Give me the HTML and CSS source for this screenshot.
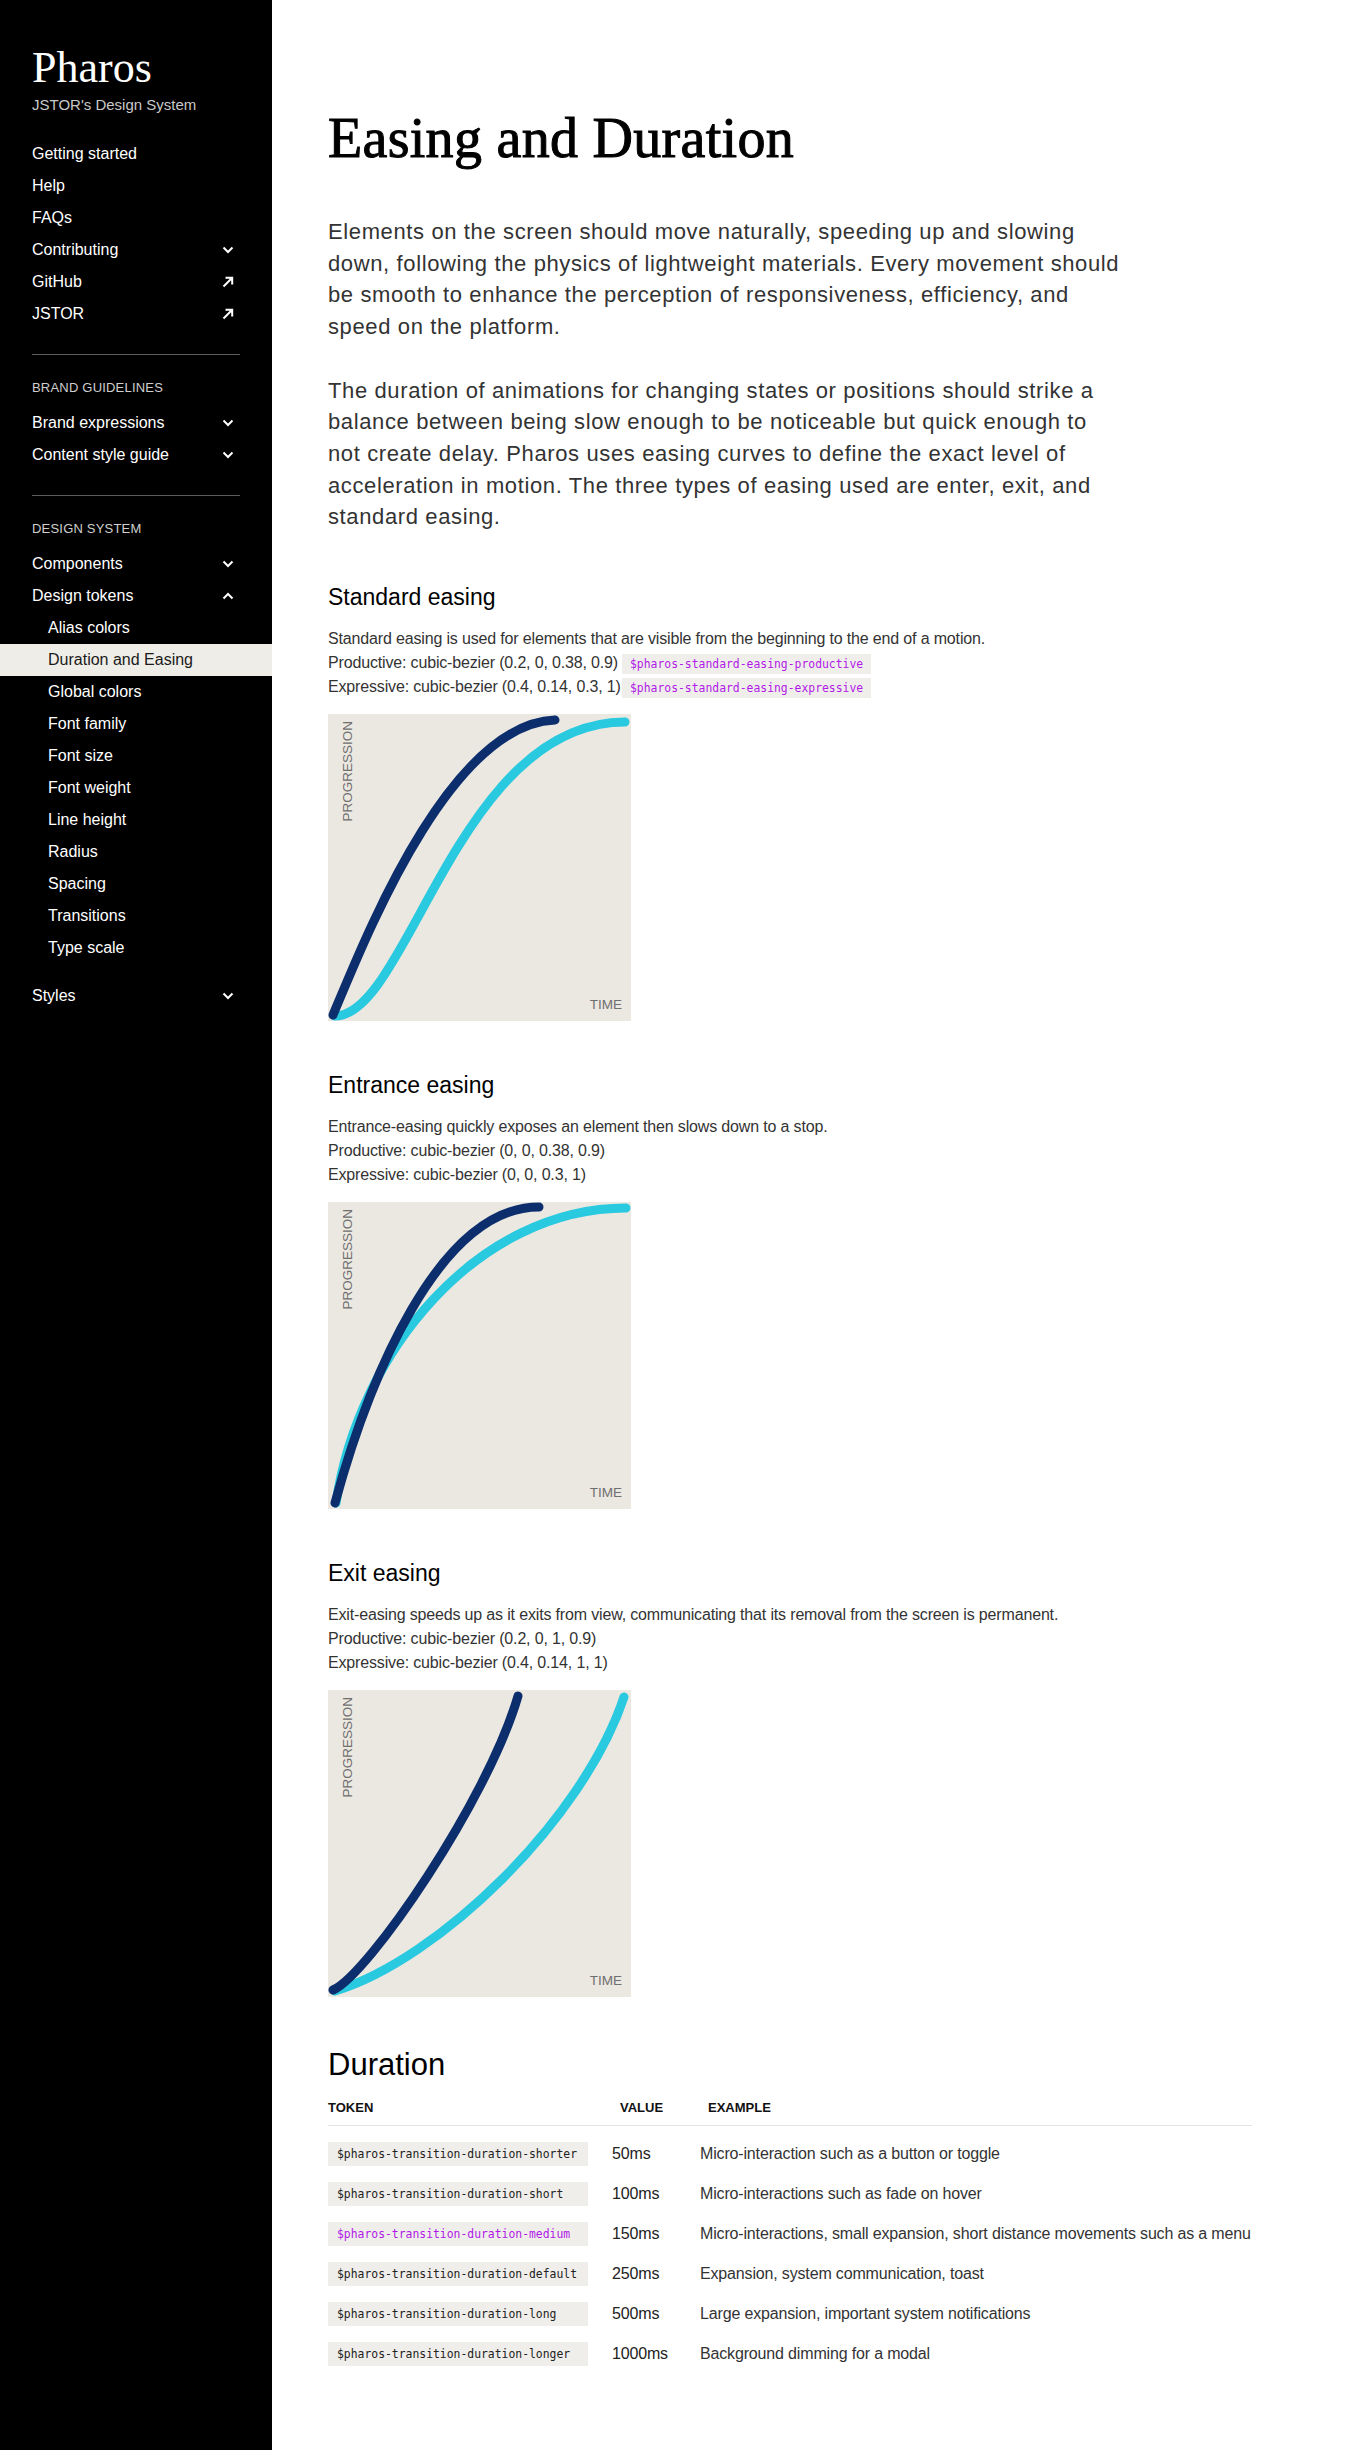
FILE: index.html
```html
<!DOCTYPE html>
<html lang="en">
<head>
<meta charset="utf-8">
<title>Easing and Duration – Pharos</title>
<link rel="stylesheet" href="styles.css">
</head>
<body>
<div class="layout">
  <aside class="sidebar">
    <div class="brand">
      <div class="brand-name">Pharos</div>
      <div class="brand-sub">JSTOR's Design System</div>
    </div>
    <ul class="nav">
      <li class="nav-item"><span>Getting started</span></li>
      <li class="nav-item"><span>Help</span></li>
      <li class="nav-item"><span>FAQs</span></li>
      <li class="nav-item"><span>Contributing</span><span class="nav-icon"><svg width="12" height="8" viewBox="0 0 12 8"><path d="M1.5 1.5 L6 6 L10.5 1.5" fill="none" stroke="currentColor" stroke-width="2"/></svg></span></li>
      <li class="nav-item"><span>GitHub</span><span class="nav-icon"><svg width="12" height="12" viewBox="0 0 12 12"><path d="M1.5 10.5 L10 2 M3.5 1.8 H10.2 V8.5" fill="none" stroke="currentColor" stroke-width="2"/></svg></span></li>
      <li class="nav-item"><span>JSTOR</span><span class="nav-icon"><svg width="12" height="12" viewBox="0 0 12 12"><path d="M1.5 10.5 L10 2 M3.5 1.8 H10.2 V8.5" fill="none" stroke="currentColor" stroke-width="2"/></svg></span></li>
    </ul>
    <hr class="divider">
    <div class="nav-section">
      <div class="nav-label">BRAND GUIDELINES</div>
      <ul class="nav nav-tight">
        <li class="nav-item"><span>Brand expressions</span><span class="nav-icon"><svg width="12" height="8" viewBox="0 0 12 8"><path d="M1.5 1.5 L6 6 L10.5 1.5" fill="none" stroke="currentColor" stroke-width="2"/></svg></span></li>
        <li class="nav-item"><span>Content style guide</span><span class="nav-icon"><svg width="12" height="8" viewBox="0 0 12 8"><path d="M1.5 1.5 L6 6 L10.5 1.5" fill="none" stroke="currentColor" stroke-width="2"/></svg></span></li>
      </ul>
    </div>
    <hr class="divider">
    <div class="nav-section">
      <div class="nav-label">DESIGN SYSTEM</div>
      <ul class="nav nav-tight">
        <li class="nav-item"><span>Components</span><span class="nav-icon"><svg width="12" height="8" viewBox="0 0 12 8"><path d="M1.5 1.5 L6 6 L10.5 1.5" fill="none" stroke="currentColor" stroke-width="2"/></svg></span></li>
        <li class="nav-item"><span>Design tokens</span><span class="nav-icon"><svg width="12" height="8" viewBox="0 0 12 8"><path d="M1.5 6.5 L6 2 L10.5 6.5" fill="none" stroke="currentColor" stroke-width="2"/></svg></span></li>
      </ul>
      <ul class="subnav">
        <li class="nav-item sub">Alias colors</li>
        <li class="nav-item sub active">Duration and Easing</li>
        <li class="nav-item sub">Global colors</li>
        <li class="nav-item sub">Font family</li>
        <li class="nav-item sub">Font size</li>
        <li class="nav-item sub">Font weight</li>
        <li class="nav-item sub">Line height</li>
        <li class="nav-item sub">Radius</li>
        <li class="nav-item sub">Spacing</li>
        <li class="nav-item sub">Transitions</li>
        <li class="nav-item sub">Type scale</li>
      </ul>
      <ul class="nav nav-styles">
        <li class="nav-item"><span>Styles</span><span class="nav-icon"><svg width="12" height="8" viewBox="0 0 12 8"><path d="M1.5 1.5 L6 6 L10.5 1.5" fill="none" stroke="currentColor" stroke-width="2"/></svg></span></li>
      </ul>
    </div>
  </aside>

  <main class="content">
    <h1 class="title">Easing and Duration</h1>
    <div class="intro">
      <p>Elements on the screen should move naturally, speeding up and slowing down, following the physics of lightweight materials. Every movement should be smooth to enhance the perception of responsiveness, efficiency, and speed on the platform.</p>
      <p>The duration of animations for changing states or positions should strike a balance between being slow enough to be noticeable but quick enough to not create delay. Pharos uses easing curves to define the exact level of acceleration in motion. The three types of easing used are enter, exit, and standard easing.</p>
    </div>

    <section class="section">
      <h2 class="section-title">Standard easing</h2>
      <div class="desc">
        <div>Standard easing is used for elements that are visible from the beginning to the end of a motion.</div>
        <div class="bezier"><span class="bezier-label">Productive: cubic-bezier (0.2, 0, 0.38, 0.9)</span><span><code class="token">$pharos-standard-easing-productive</code></span></div>
        <div class="bezier"><span class="bezier-label">Expressive: cubic-bezier (0.4, 0.14, 0.3, 1)</span><span><code class="token">$pharos-standard-easing-expressive</code></span></div>
      </div>
      <svg class="chart" width="303" height="307" viewBox="0 0 303 307">
        <rect width="303" height="307" fill="#ebe8e1"/>
        <text class="axis" transform="translate(23.5 107.5) rotate(-90)">PROGRESSION</text>
        <text class="axis" x="294" y="295" text-anchor="end">TIME</text>
        <path d="M7 302 C80 302 130 8 297 8" class="curve-light"/>
        <path d="M5 301 C35 230 120 10 227 6" class="curve-dark"/>
      </svg>
    </section>

    <section class="section">
      <h2 class="section-title">Entrance easing</h2>
      <div class="desc">
        <div>Entrance-easing quickly exposes an element then slows down to a stop.</div>
        <div>Productive: cubic-bezier (0, 0, 0.38, 0.9)</div>
        <div>Expressive: cubic-bezier (0, 0, 0.3, 1)</div>
      </div>
      <svg class="chart" width="303" height="307" viewBox="0 0 303 307">
        <rect width="303" height="307" fill="#ebe8e1"/>
        <text class="axis" transform="translate(23.5 107.5) rotate(-90)">PROGRESSION</text>
        <text class="axis" x="294" y="295" text-anchor="end">TIME</text>
        <path d="M8 301 C30 150 150 6 298 6" class="curve-light"/>
        <path d="M7 301 C40 180 110 5 211 5" class="curve-dark"/>
      </svg>
    </section>

    <section class="section">
      <h2 class="section-title">Exit easing</h2>
      <div class="desc">
        <div>Exit-easing speeds up as it exits from view, communicating that its removal from the screen is permanent.</div>
        <div>Productive: cubic-bezier (0.2, 0, 1, 0.9)</div>
        <div>Expressive: cubic-bezier (0.4, 0.14, 1, 1)</div>
      </div>
      <svg class="chart" width="303" height="307" viewBox="0 0 303 307">
        <rect width="303" height="307" fill="#ebe8e1"/>
        <text class="axis" transform="translate(23.5 107.5) rotate(-90)">PROGRESSION</text>
        <text class="axis" x="294" y="295" text-anchor="end">TIME</text>
        <path d="M7 301 C110 270 255 130 296 7" class="curve-light"/>
        <path d="M5 300 C40 285 160 110 190 6" class="curve-dark"/>
      </svg>
    </section>

    <section class="section">
      <h2 class="duration-title">Duration</h2>
      <div class="dtable">
        <div class="dhead">
          <div>TOKEN</div>
          <div class="pad">VALUE</div>
          <div class="pad">EXAMPLE</div>
        </div>
        <div class="dbody">
          <div class="drow"><div><code class="token-block">$pharos-transition-duration-shorter</code></div><div class="dval">50ms</div><div class="dex">Micro-interaction such as a button or toggle</div></div>
          <div class="drow"><div><code class="token-block">$pharos-transition-duration-short</code></div><div class="dval">100ms</div><div class="dex">Micro-interactions such as fade on hover</div></div>
          <div class="drow"><div><code class="token-block hl">$pharos-transition-duration-medium</code></div><div class="dval">150ms</div><div class="dex">Micro-interactions, small expansion, short distance movements such as a menu</div></div>
          <div class="drow"><div><code class="token-block">$pharos-transition-duration-default</code></div><div class="dval">250ms</div><div class="dex">Expansion, system communication, toast</div></div>
          <div class="drow"><div><code class="token-block">$pharos-transition-duration-long</code></div><div class="dval">500ms</div><div class="dex">Large expansion, important system notifications</div></div>
          <div class="drow"><div><code class="token-block">$pharos-transition-duration-longer</code></div><div class="dval">1000ms</div><div class="dex">Background dimming for a modal</div></div>
        </div>
      </div>
    </section>
  </main>
</div>
</body>
</html>
```
FILE: styles.css
```css
* { box-sizing: border-box; }

body {
  margin: 0;
  font-family: "Liberation Sans", Arial, sans-serif;
  color: #333;
  background: #fff;
}

.layout {
  display: flex;
  min-height: 100vh;
}

/* Sidebar */
.sidebar {
  width: 272px;
  flex: none;
  background: #000;
  color: #fff;
  padding: 46px 32px 0;
}

.brand-name {
  font-family: "Liberation Serif", "Times New Roman", serif;
  font-size: 44px;
  line-height: 44px;
  color: #fff;
}

.brand-sub {
  margin-top: 5px;
  font-size: 15px;
  line-height: 20px;
  color: #c9c9c9;
}

.nav, .subnav {
  list-style: none;
  margin: 23px 0 0;
  padding: 0;
}

.nav-tight, .subnav { margin-top: 0; }

.nav-styles { margin-top: 16px; }

.nav-item {
  display: flex;
  align-items: center;
  justify-content: space-between;
  height: 32px;
  font-size: 16px;
  color: #fff;
}

.nav-icon {
  width: 24px;
  display: flex;
  justify-content: center;
  align-items: center;
}

.nav-icon svg { display: block; }

.nav-item.sub {
  margin: 0 -32px;
  padding-left: 48px;
  justify-content: flex-start;
}

.nav-item.active {
  background: #efede8;
  color: #1a1a1a;
}

.divider {
  border: 0;
  border-top: 1px solid #5e5e5e;
  margin: 24px 0 0;
}

.nav-section { padding-top: 25px; }

.nav-label {
  font-size: 13px;
  line-height: 16px;
  color: #cfcfcf;
  margin-bottom: 11px;
  letter-spacing: 0.2px;
}

/* Content */
.content {
  flex: 1;
  padding: 106px 0 80px 56px;
}

.title {
  margin: 0;
  font-family: "Liberation Serif", "Times New Roman", serif;
  font-weight: 400;
  font-size: 56px;
  line-height: 64px;
  color: #000;
  letter-spacing: 0.3px;
  -webkit-text-stroke: 1px #000;
}

.intro {
  max-width: 795px;
  margin-top: 46px;
}

.intro p {
  margin: 0 0 32px;
  font-size: 22px;
  line-height: 1.44;
  letter-spacing: 0.62px;
  color: #333;
}

.intro p:last-child { margin-bottom: 0; }

.section { margin-top: 48px; }

.section-title {
  margin: 0;
  font-size: 23px;
  line-height: 32px;
  font-weight: 400;
  color: #000;
}

.desc {
  margin-top: 14px;
  font-size: 16px;
  line-height: 24px;
  letter-spacing: -0.16px;
  color: #333;
}

.bezier {
  display: grid;
  grid-template-columns: 294px auto;
  align-items: center;
}

.bezier-label { white-space: nowrap; }

.token {
  display: inline-block;
  vertical-align: middle;
  background: #f0eeea;
  color: #b01ae8;
  font-family: "DejaVu Sans Mono", "Liberation Mono", monospace;
  font-size: 11.4px;
  line-height: 20px;
  letter-spacing: 0;
  white-space: nowrap;
  padding: 0 8px;
}

.chart {
  display: block;
  margin-top: 15px;
}

.axis {
  font-family: "Liberation Sans", Arial, sans-serif;
  font-size: 13.5px;
  fill: #6f6f6f;
}

.curve-dark, .curve-light {
  fill: none;
  stroke-width: 9;
  stroke-linecap: round;
}

.curve-dark { stroke: #0c2e6c; }
.curve-light { stroke: #29c9df; }

/* Duration table */
.duration-title {
  margin: 0 0 12.5px;
  font-size: 31px;
  line-height: 40px;
  font-weight: 400;
  color: #000;
}

.dtable { width: 924px; }

.dhead, .drow {
  display: grid;
  grid-template-columns: 284px 88px 1fr;
}

.dhead {
  font-size: 13px;
  line-height: 20px;
  font-weight: 700;
  color: #111;
  padding-bottom: 7.5px;
  border-bottom: 1px solid #e3e3e3;
}

.dhead .pad { padding-left: 8px; }

.dbody { padding-top: 8px; }

.drow {
  height: 40px;
  align-items: center;
  font-size: 16px;
  letter-spacing: -0.16px;
  color: #333;
}

.dval { color: #222; }

.dex { white-space: nowrap; }

.token-block {
  display: block;
  width: 260px;
  height: 24px;
  line-height: 24px;
  padding: 0 9px;
  background: #f0eeea;
  color: #222;
  font-family: "DejaVu Sans Mono", "Liberation Mono", monospace;
  font-size: 11.4px;
  letter-spacing: 0;
  white-space: nowrap;
  overflow: hidden;
}

.token-block.hl { color: #b01ae8; }
```
